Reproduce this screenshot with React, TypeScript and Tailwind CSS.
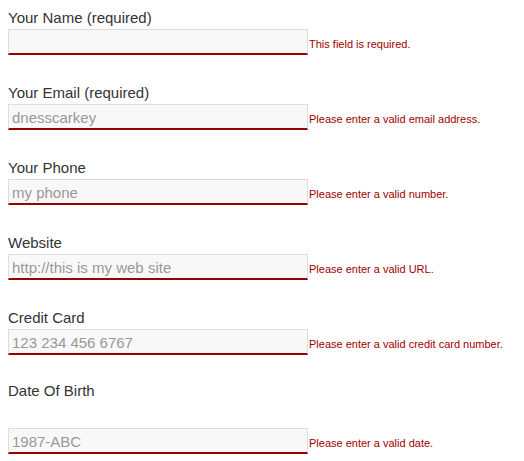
const FIELDS = [
  { label: "Your Name (required)", placeholder: "", error: "This field is required." },
  { label: "Your Email (required)", placeholder: "dnesscarkey", error: "Please enter a valid email address." },
  { label: "Your Phone", placeholder: "my phone", error: "Please enter a valid number." },
  { label: "Website", placeholder: "http://this is my web site", error: "Please enter a valid URL." },
  { label: "Credit Card", placeholder: "123 234 456 6767", error: "Please enter a valid credit card number." },
  { label: "Date Of Birth", placeholder: "1987-ABC", error: "Please enter a valid date.", tall: true },
];

function Field({ label, placeholder, error, tall }: { label: string; placeholder: string; error: string; tall?: boolean }) {
  return (
    <div className={tall ? "-mt-[2px]" : ""}>
      <label className={`block text-[15px] leading-5 text-[#333] ${tall ? "mb-[27px]" : "mb-px"}`}>{label}</label>
      <div className="flex items-baseline">
        <input
          type="text"
          placeholder={placeholder}
          className="box-border h-[26px] w-[300px] border border-[#ddd] border-b-2 border-b-[#990000] bg-[#f8f8f8] pt-[2px] pl-[3px] text-[15px] text-[#333] outline-none placeholder:text-[#999]"
        />
        <span className="pl-px text-[11px] text-[#a00000]">{error}</span>
      </div>
    </div>
  );
}

export default function App() {
  return (
    <div className="min-h-[461px] w-[524px] bg-white p-2 font-['Liberation_Sans',Arial,sans-serif]">
      <form className="flex flex-col gap-[28px]">
        {FIELDS.map(f => (
          <Field key={f.label} {...f} />
        ))}
      </form>
    </div>
  );
}
